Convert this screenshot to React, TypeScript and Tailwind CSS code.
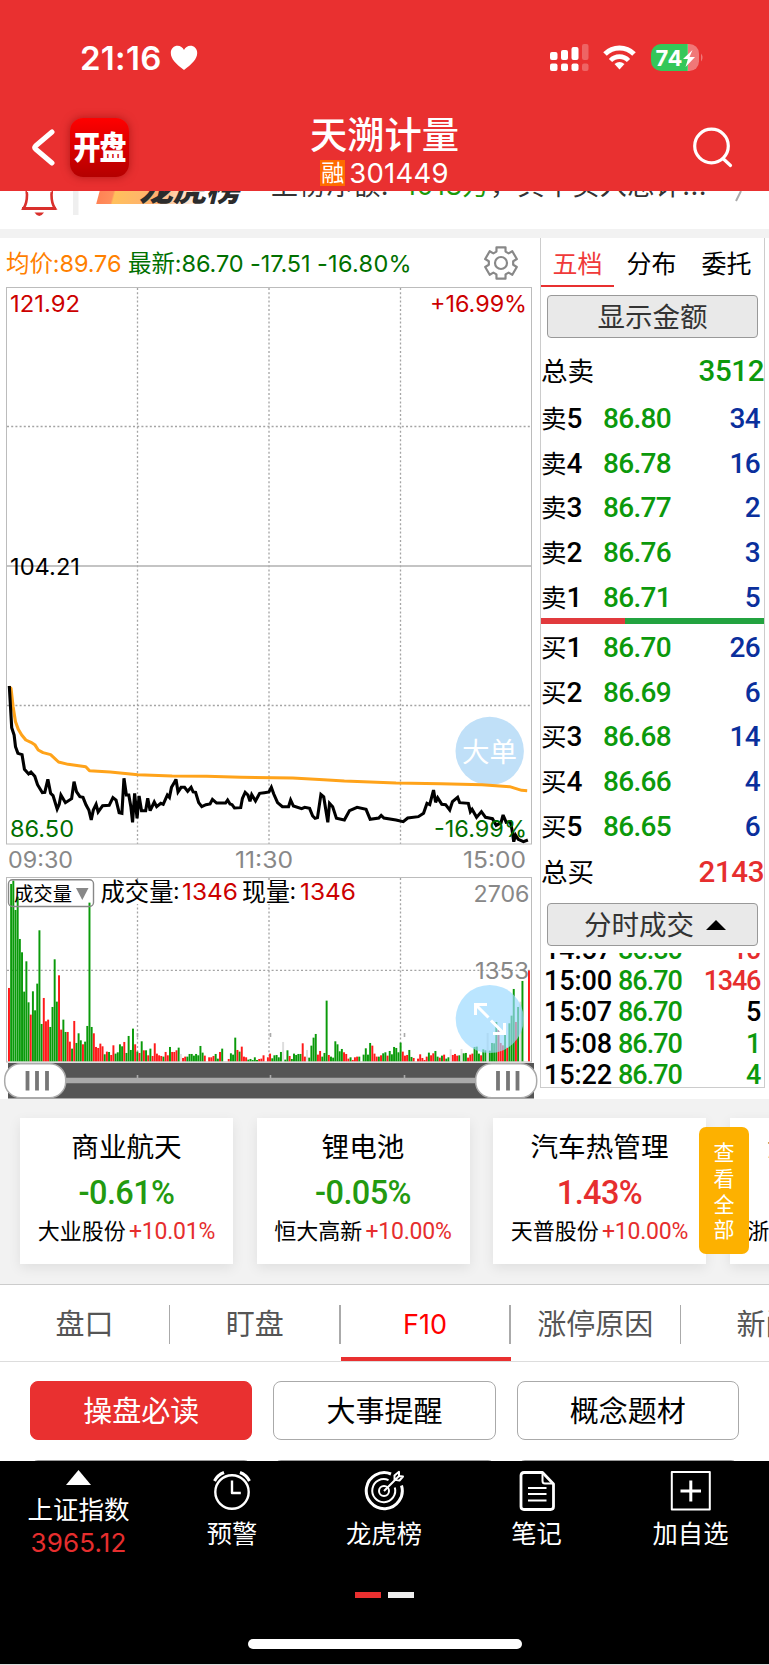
import React from "react";

const NUM = "font-[Inter,'Noto_Sans_CJK_SC',sans-serif]";
const DIN = "font-[Roboto,'Noto_Sans_CJK_SC',sans-serif]";

const VOLUME =
  "r354 g42 g32 g120 g80 g207 g247 g365 g274 g397 r434 g364 g421 g341 g181 g462 r384 r454 r449 g471 g411 g268 g395 r316 r479 g449 g486 r486 r515 g536 r453 g519 g490 g511 r523 g515 g468 g98 g471 r490 r531 r534 r521 r529 g553 r545 g546 r555 r526 g551 g547 g523 g529 r516 g549 g498 g540 g476 r523 g545 r549 g514 r541 g541 r556 g536 r558 r520 r551 r556 r558 g560 r546 r556 g531 r546 r546 r541 g533 y552 r564 r560 g560 g552 g552 g557 g552 g556 g528 g548 r557 y574 r562 r562 r558 g552 g566 r546 g536 y574 y574 r567 g550 g554 g503 r540 g545 r530 r560 r562 g569 g567 g570 g562 g570 r567 r566 r556 y574 r562 r551 g565 g556 g555 g562 g546 y516 g569 g541 r558 g567 g551 g555 g552 g552 r520 r560 y540 g563 g527 g503 g492 r554 r543 g560 g549 g392 r555 g560 g563 g514 g523 g544 g537 r547 r552 r566 g562 r570 r562 r560 g560 y574 g554 g535 g554 g519 r527 r551 r560 g560 r556 g550 g547 r557 g543 g553 g531 g534 g547 g518 r545 r557 r555 g540 g561 r564 y574 r566 r553 r564 r570 r560 g548 r556 r550 g543 g560 r563 g557 r554 g566 g562 y538 r555 r552 r557 g556 y537 g550 g549 r563 r554 r551 g531 g530 g551 r556 g538 g541 y489 g542 g519 g520 g456 r480 r519 r526 g483 r533 g460 g437 g357 r456 g411 y395 g333 y574 y574 r302";

const BARS = VOLUME.split(" ").map((s) => ({
  fill: s[0] === "r" ? "#ff1a1a" : s[0] === "g" ? "#0a9a0a" : "#dddddd",
  h: (574 - Number(s.slice(1))) / 3,
}));
const BAR_STEP = (529 - 9) / (BARS.length - 1);

const PRICE =
  "27,78 34,203 41,225 45,260 52,280 64,284 71,328 83,342 90,336 101,349 109,374 123,398 130,397 139,358 147,400 154,407 166,447 172,433 177,405 190,428 208,416 215,365 222,395 232,410 241,412 250,435 258,450 265,480 271,450 279,433 285,456 298,437 317,436 328,413 337,420 346,458 354,460 360,355 367,405 374,405 380,440 385,487 391,400 398,475 404,408 411,452 423,452 429,415 436,452 448,426 455,440 467,430 474,433 486,405 492,412 498,382 505,370 511,358 517,396 526,382 536,382 545,394 555,382 561,396 568,397 577,428 586,440 598,434 610,432 617,418 629,429 655,429 661,420 668,432 674,434 681,444 699,443 704,415 712,397 720,405 726,424 731,404 742,423 754,400 768,398 781,396 788,382 795,402 806,428 820,440 838,440 844,420 852,438 876,446 885,442 899,445 908,468 915,475 922,473 932,403 940,410 952,487 957,430 966,440 977,475 1000,480 1015,452 1037,442 1063,448 1075,478 1100,474 1107,466 1115,474 1150,480 1171,485 1184,474 1215,470 1230,460 1240,430 1248,434 1259,390 1265,427 1271,413 1283,433 1294,434 1306,450 1314,425 1329,412 1335,428 1360,430 1366,455 1371,448 1384,472 1398,455 1410,472 1430,476 1441,496 1455,488 1461,465 1470,487 1482,485 1487,510 1492,545 1497,525 1505,538 1520,545 1533,540";
const AVERAGE =
  "26,80 32,85 38,140 45,185 53,208 63,225 75,240 90,247 101,254 111,270 125,278 147,284 170,306 198,313 249,320 260,332 320,336 400,344 500,348 600,349 700,352 850,354 940,359 1000,363 1150,369 1280,371 1400,374 1480,380 1515,391 1531,392";

type LabelProps = { x: number; y: number; w: number; fill: string; size?: number; children: React.ReactNode };
const Label = ({ x, y, w, fill, size = 23, children }: LabelProps) => (
  <text x={x} y={y} textLength={w} lengthAdjust="spacingAndGlyphs" fill={fill} fontSize={size}>
    {children}
  </text>
);

function StatusBar() {
  return (
    <div className="flex h-[114px] items-start pl-[80px] pr-[65px] pt-[41px] text-white">
      <span className="w-[83px] text-[33px] font-semibold leading-[34px] tracking-[0.300px]">21:16</span>
      <svg className="ml-[7px] mt-[4px]" width="28" height="26" viewBox="0 0 28 26" fill="#fff">
        <path d="M14 25C6 19 0.8 14 0.8 8C0.8 3.5 4 .8 7.6 .8C10.4 .8 12.8 2.4 14 5C15.2 2.4 17.6 .8 20.4 .8C24 .8 27.2 3.5 27.2 8C27.2 14 22 19 14 25Z" />
      </svg>
      <div className="flex-1" />
      <svg className="mt-[2px]" width="154" height="30" viewBox="551 43 154 30" fill="#fff">
        <rect x="551" y="52" width="7.5" height="8" rx="2" />
        <rect x="562" y="50" width="7" height="10" rx="2" />
        <rect x="572.5" y="47" width="7" height="13" rx="2" />
        <rect x="583" y="44" width="6.5" height="16" rx="2" opacity=".25" />
        <rect x="551" y="63.500" width="7.5" height="7.500" rx="2" />
        <rect x="562" y="63.500" width="7" height="7.500" rx="2" />
        <rect x="572.5" y="63.500" width="7" height="7.500" rx="2" />
        <rect x="583" y="63.500" width="6.500" height="7.500" rx="2" opacity=".25" />
        <path d="M606 54a20.500 20.500 0 0 1 29 0" fill="none" stroke="#fff" strokeWidth="5" />
        <path d="M611.500 60.500a12.500 12.500 0 0 1 18 0" fill="none" stroke="#fff" strokeWidth="4.600" />
        <path d="M620.500 69.500l-5-5.500q5-4 10 0z" />
        <path d="M662 44h27v27h-27a10 10 0 0 1-10-10v-7a10 10 0 0 1 10-10z" fill="#34c759" />
        <path d="M688.500 44h2a9.500 9.500 0 0 1 9.500 9.500v8a9.500 9.500 0 0 1-9.500 9.500h-2z" opacity=".35" />
        <path d="M702 53.500q3 4 0 8z" opacity=".35" />
        <text x="656.500" y="65.500" fontSize="22" fontWeight="700" textLength="27">74</text>
        <path d="M693.500 50l-9.500 9h5l-2.500 8 9.500-10h-5.500z" />
      </svg>
    </div>
  );
}

function TitleBar() {
  return (
    <div className="flex h-[77px] text-white">
      <div className="flex w-[240px] items-start pl-[30px]">
        <svg className="mt-[15px]" width="26" height="37" viewBox="0 0 26 37" fill="none" stroke="#fff" strokeWidth="5" strokeLinecap="round" strokeLinejoin="round">
          <path d="M22 3L5.500 17Q4 18.500 5.500 20L22 34" />
        </svg>
        <div className="ml-[14px] mt-[4px] flex h-[59px] w-[59px] items-center justify-center rounded-[13px] bg-gradient-to-b from-[#ff0000] to-[#b40000] text-[27px] font-black leading-none tracking-[-1px] shadow-[0_0_8px_rgba(120,0,0,0.5)]">
          <span className="scale-y-[1.18]">开盘</span>
        </div>
      </div>
      <div className="flex w-[289px] flex-col items-center">
        <div className="h-[44px] text-[37.300px] font-medium leading-[44px]">天溯计量</div>
        <div className="flex h-[27px] items-center">
          <span className="mt-[2px] flex h-[26px] w-[25px] items-center justify-center bg-[#ff6a00] text-[23px] leading-[26px]">融</span>
          <span className="ml-[4px] mt-[3px] text-[27.500px] leading-[26px] tracking-[0.200px]">301449</span>
        </div>
      </div>
      <div className="flex-1 pl-[164px] pt-[13px]">
        <svg width="42" height="42" viewBox="0 0 42 42" fill="none" stroke="#fff" strokeWidth="3.200" strokeLinecap="round">
          <circle cx="18.500" cy="19" r="16.800" />
          <path d="M30.500 32L37.500 38.500" />
        </svg>
      </div>
    </div>
  );
}

function Notice() {
  return (
    <div className="flex h-[38px] overflow-hidden bg-white">
      <svg width="80" height="38" viewBox="0 191 80 38" className="shrink-0" fill="none">
        <path d="M27 191q-.5 0 0 3.500q0 9-3.500 14h31.500q-3.500-5-3.500-14q.5-3.500 0-3.500" stroke="#d9302c" strokeWidth="2.600" />
        <path d="M22 208.500h34" stroke="#d9302c" strokeWidth="3" />
        <path d="M34.500 212.500h9.500q-4.700 7-9.500 0z" fill="#d9302c" />
        <rect x="73" y="191" width="5.500" height="24" fill="#efefef" />
      </svg>
      <div className="ml-[15px] flex h-[13px] w-[152px] items-end overflow-hidden bg-[linear-gradient(105deg,#fff_4px,#ff8355_5px,#ff8f5c_18px,#ffc05c_20px,#ffb071_60px,#fff_108px)]">
        <span className="-mb-[5px] ml-[44px] whitespace-nowrap text-[34px] font-black italic leading-[40px] tracking-[-0.500px] text-[#2c2c2c]">龙虎榜</span>
      </div>
      <div className="-mt-[25px] ml-[24px] w-[442px] whitespace-nowrap text-[27px] leading-[40px] tracking-[0.450px] text-[#333]">
        上榜净额: <span className="ml-[8px] text-[#1a9a0a]">1018万</span>，其中买入总计...
      </div>
      <svg className="ml-[18px]" width="14" height="14" viewBox="0 0 14 14" fill="none" stroke="#aaa" strokeWidth="2">
        <path d="M10 0L5 10" />
      </svg>
    </div>
  );
}

function PriceChart() {
  const dots = { stroke: "#a4a4a4", strokeWidth: 1.300, strokeDasharray: "2 2.200" };
  return (
    <svg className="block" width="540" height="588" viewBox="0 287 540 588" fontFamily="Inter, 'Noto Sans CJK SC', sans-serif">
      <path d="M137.500 288V844M269 288V844M400.500 288V844M7 426.500H531M7 705.500H531" {...dots} />
      <path d="M7 566H531" stroke="#b0b0b0" strokeWidth="1.400" />
      <rect x="6.500" y="287.500" width="525" height="556.500" fill="none" stroke="#bcbcbc" />
      <circle cx="489.700" cy="751" r="34.200" fill="#c0e0f8" />
      <g transform="translate(0 660) scale(.34435 .33333)" fill="none" strokeWidth="9" strokeLinejoin="round">
        <polyline points={AVERAGE} stroke="#ffa31a" />
        <polyline points={PRICE} stroke="#000" strokeLinejoin="miter" strokeMiterlimit="3" />
      </g>
      <Label x={462} y={761.500} w={55} size={27.500} fill="#fff">大单</Label>
      <Label x={10} y={312} w={70} fill="#cc0000">121.92</Label>
      <Label x={430} y={312} w={97} fill="#cc0000">+16.99%</Label>
      <Label x={10} y={575} w={70} fill="#000">104.21</Label>
      <Label x={10} y={837} w={64} fill="#006e00">86.50</Label>
      <Label x={434} y={837} w={93} fill="#006e00">-16.99%</Label>
      <Label x={8} y={868} w={65} fill="#888">09:30</Label>
      <Label x={235} y={868} w={58} fill="#888">11:30</Label>
      <Label x={463} y={868} w={63} fill="#888">15:00</Label>
    </svg>
  );
}

function VolumeChart() {
  return (
    <svg className="block" width="540" height="224" viewBox="0 875 540 224" fontFamily="Inter, 'Noto Sans CJK SC', sans-serif">
      <path d="M137.500 878V1062M269 878V1062M400.500 878V1062M7 970.300H531" stroke="#a4a4a4" strokeWidth="1.300" strokeDasharray="2 2.200" />
      <rect x="6.500" y="877.500" width="525" height="184.500" fill="none" stroke="#bcbcbc" />
      {BARS.map((b, i) => (
        <rect key={i} x={8 + i * BAR_STEP} y={1061.300 - b.h} width="1.950" height={b.h} fill={b.fill} />
      ))}
      <rect x="8.500" y="879.700" width="85" height="26.800" rx="4" fill="none" stroke="#888" strokeWidth="1.400" />
      <Label x={14} y={900.500} w={58} size={19.500} fill="#000">成交量</Label>
      <path d="M76 888h12.500l-6.200 12z" fill="#888" />
      <rect x="99" y="882" width="258" height="22" fill="#fff" />
      <Label x={100.500} y={901} w={73} size={24.500} fill="#000">成交量</Label>
      <text x="173" y="899" fontSize="23">:</text>
      <Label x={182} y={899.500} w={56} fill="#cc0000">1346</Label>
      <Label x={242} y={901} w={48} size={24.500} fill="#000">现量</Label>
      <text x="289.500" y="899" fontSize="23">:</text>
      <Label x={300} y={899.500} w={56} fill="#cc0000">1346</Label>
      <Label x={473.500} y={902} w={56} fill="#888">2706</Label>
      <Label x={475} y={979} w={54} fill="#888">1353</Label>
      <circle cx="489.700" cy="1019" r="34" fill="#9ad8ff" fillOpacity=".68" />
      <path d="M475.500 1015v-10.500h11.500M475.500 1004.500l13 13M491 1020.500l13 13M504.500 1023v10.500h-11.500" fill="none" stroke="#fff" strokeWidth="3" />
      <rect x="8" y="1063" width="526" height="35.500" fill="#555" />
      <path d="M30 1080.500H510" stroke="#aaa" strokeWidth="5.500" />
      <path d="M137.500 1075v4M270.500 1075v4M404.500 1075v4M137.500 1033v4M270.500 1033v4M404.500 1033v4" stroke="#aaa" strokeWidth="1.600" />
      <rect x="4.700" y="1063.700" width="61" height="34" rx="16" fill="#fff" stroke="#aaa" strokeWidth="1.500" />
      <rect x="475.700" y="1063.700" width="61" height="34" rx="16" fill="#fff" stroke="#aaa" strokeWidth="1.500" />
      <path d="M27.500 1071v19.500M37 1071v19.500M47 1071v19.500M498 1071v19.500M508 1071v19.500M517.500 1071v19.500" stroke="#777" strokeWidth="3.800" />
    </svg>
  );
}

function Gear() {
  const pts: string[] = [];
  for (let i = 0; i < 6; i++) {
    const a = (i * Math.PI) / 3 - Math.PI / 2;
    const p = (r: number, d: number) => `${(18 + r * Math.cos(a + d)).toFixed(2)},${(18 + r * Math.sin(a + d)).toFixed(2)}`;
    pts.push(p(12.300, -0.380), p(16.300, -0.280), p(16.300, 0.280), p(12.300, 0.380));
  }
  return (
    <svg width="36" height="36" viewBox="0 0 36 36" fill="none" stroke="#888" strokeWidth="2.200" strokeLinejoin="round">
      <polygon points={pts.join(" ")} />
      <circle cx="18" cy="18" r="6" />
    </svg>
  );
}

function ChartPane() {
  return (
    <div className="w-[540px] bg-white">
      <div className="flex h-[49px] items-center whitespace-nowrap pt-[3px] text-[23.500px] leading-none">
        <span className="w-[121px] pl-[6px] tracking-[-0.100px] text-[#ff8000]">均价:89.76</span>
        <span className="w-[124px] pl-[7px] tracking-[-0.100px] text-[#007000]">最新:86.70</span>
        <span className="w-[69px] pl-[5px] tracking-[-0.100px] text-[#007000]">-17.51</span>
        <span className="flex-1 pl-[3px] tracking-[0.300px] text-[#007000]">-16.80%</span>
        <span className="-mt-[2px] w-[57px]"><Gear /></span>
      </div>
      <PriceChart />
      <VolumeChart />
    </div>
  );
}

const SELL = [["卖5", "86.80", "34"], ["卖4", "86.78", "16"], ["卖3", "86.77", "2"], ["卖2", "86.76", "3"], ["卖1", "86.71", "5"]];
const BUY = [["买1", "86.70", "26"], ["买2", "86.69", "6"], ["买3", "86.68", "14"], ["买4", "86.66", "4"], ["买5", "86.65", "6"]];
const TRADES = [
  ["14:57", "86.80", "10", "text-[#e62e2e]"],
  ["15:00", "86.70", "1346", "text-[#e62e2e]"],
  ["15:07", "86.70", "5", "text-black"],
  ["15:08", "86.70", "1", "text-[#0c990c]"],
  ["15:22", "86.70", "4", "text-[#0c990c]"],
];

function Level({ row }: { row: string[] }) {
  return (
    <div className="flex h-[44.600px] items-center pt-[2px] text-[28px] font-medium leading-none">
      <span className="w-[62px]"><span className="text-[25.500px] font-normal">{row[0][0]}</span>{row[0][1]}</span>
      <span className="tracking-[-0.700px] text-[#0c990c]">{row[1]}</span>
      <span className="flex-1 pr-[4px] text-right tracking-[-0.700px] text-[#0a2f9c]">{row[2]}</span>
    </div>
  );
}

function OrderBook() {
  return (
    <div className="w-[229px] bg-white">
      <div className={`${DIN} h-[849.500px] w-[225px] overflow-hidden border-x border-b border-[#ccc]`}>
        <div className="flex h-[49px] text-[25px] leading-[53px]">
          <span className="w-[73px] border-b-2 border-[#e83030] text-center text-[#f03a3a]">五档</span>
          <span className="w-[75px] text-center">分布</span>
          <span className="w-[75px] text-center">委托</span>
        </div>
        <div className="mx-[6px] mt-[8px] h-[43px] rounded-[4px] border border-[#999] bg-[#e9e9e9] text-center text-[27.500px] leading-[43px] text-[#333]">显示金额</div>
        <div className="mt-[10px] flex h-[47px] items-center justify-between pt-[1px] leading-none">
          <span className="text-[26.500px]">总卖</span>
          <span className="text-[29.500px] font-medium tracking-[-0.400px] text-[#0c990c]">3512</span>
        </div>
        <div className="mt-[1px]">{SELL.map((r) => <Level key={r[0]} row={r} />)}</div>
        <div className="-mt-[1px] flex h-[6px]"><i className="w-[84px] bg-[#e13a3d]" /><i className="flex-1 bg-[#23a340]" /></div>
        <div className="mt-[1px]">{BUY.map((r) => <Level key={r[0]} row={r} />)}</div>
        <div className="mt-[1px] flex h-[46px] items-center justify-between pt-[2px] leading-none">
          <span className="text-[26.500px]">总买</span>
          <span className="text-[29.500px] font-medium tracking-[-0.400px] text-[#e62e2e]">2143</span>
        </div>
        <div className="mx-[6px] mt-[8px] flex h-[43px] items-center rounded-[4px] border border-[#999] bg-[#e9e9e9] pl-[36px] pt-[2px] text-[27.500px] leading-none text-[#333]">
          分时成交
          <svg className="ml-[12px]" width="20" height="10" viewBox="0 0 20 10"><path d="M0 10L10 0L20 10z" /></svg>
        </div>
        <div className="mt-[7px] flex h-[137px] flex-col justify-end overflow-hidden">
          {TRADES.map((t) => (
            <div key={t[0]} className="flex h-[31.200px] shrink-0 items-center pt-[2px] text-[27px] font-medium leading-none">
              <span className="w-[77px] pl-[3px] tracking-[-0.100px]">{t[0]}</span>
              <span className="tracking-[-1px] text-[#0c990c]">{t[1]}</span>
              <span className={`flex-1 pr-[4px] text-right tracking-[-1.300px] ${t[3]}`}>{t[2]}</span>
            </div>
          ))}
        </div>
      </div>
    </div>
  );
}

const SECTORS = [
  ["商业航天", "-0.61%", "大业股份", "+10.01%"],
  ["锂电池", "-0.05%", "恒大高新", "+10.00%"],
  ["汽车热管理", "1.43%", "天普股份", "+10.00%"],
  ["液冷服务器", "1.20%", "浙江世宝", "+10.00%"],
];

function Sectors() {
  return (
    <div className="relative h-[185px] overflow-hidden bg-[#f2f2f2]">
      <div className="flex gap-[23.500px] pl-[20px] pt-[19px]">
        {SECTORS.map(([name, pct, stock, gain]) => (
          <div key={name} className="flex h-[146px] w-[213px] shrink-0 flex-col items-center whitespace-nowrap bg-white shadow-[0_4px_12px_rgba(0,0,0,0.08)]">
            <div className="mt-[9px] h-[44px] text-[27.600px] leading-[41px]">{name}</div>
            <div className={`${DIN} h-[44px] text-[32.500px] font-medium leading-[44px] tracking-[-0.600px] ${pct[0] === "-" ? "text-[#239a10]" : "text-[#e62e2e]"}`}>{pct}</div>
            <div className="h-[36px] text-[22px] leading-[33px]">
              {stock}
              <span className={`${DIN} ml-[3px] text-[23px] tracking-[-0.200px] text-[#e62e2e]`}>{gain}</span>
            </div>
          </div>
        ))}
      </div>
      <div className="absolute left-[699px] top-[28px] flex h-[127px] w-[50px] flex-col items-center justify-center rounded-[7px] bg-[#fdb100] pt-[2px] text-[21px] leading-[25.800px] text-white">
        <span>查</span><span>看</span><span>全</span><span>部</span>
      </div>
    </div>
  );
}

const TABS = ["盘口", "盯盘", "F10", "涨停原因", "新闻"];

function Tabs() {
  return (
    <div className="flex h-[78px] overflow-hidden border-y border-t-[#ccc] border-b-[#ddd] bg-white">
      {TABS.map((t) => (
        <div key={t} className={`flex w-[170.300px] shrink-0 items-center border-b-[4px] text-[29px] leading-none ${t === "F10" ? "border-[#e93030] text-[#ff0000]" : "border-transparent text-[#555]"}`}>
          <span className={`flex-1 pt-[7px] text-center ${t === "F10" ? "text-[27px]" : ""}`}>{t}</span>
          <i className="mt-[6px] h-[39px] w-[1.500px] bg-[#aaa]" />
        </div>
      ))}
    </div>
  );
}

function Pills() {
  return (
    <div className="grid h-[99px] grid-cols-3 gap-x-[21px] gap-y-[19.500px] overflow-hidden bg-white px-[30px] pt-[19px] text-center text-[29px] leading-[60px]">
      <div className="h-[59px] rounded-[8px] border border-[#e93030] bg-[#e93030] text-white">操盘必读</div>
      <div className="h-[59px] rounded-[8px] border border-[#aaa]">大事提醒</div>
      <div className="h-[59px] rounded-[8px] border border-[#aaa]">概念题材</div>
      <div className="h-[59px] rounded-[8px] border border-[#999]" />
      <div className="h-[59px] rounded-[8px] border border-[#999]" />
      <div className="h-[59px] rounded-[8px] border border-[#999]" />
    </div>
  );
}

function Tool({ label, width, children }: { label: string; width: string; children: React.ReactNode }) {
  return (
    <div className={`flex flex-col items-center pt-[9px] ${width}`}>
      <svg width="42" height="42" viewBox="0 0 42 42" fill="none" stroke="#fff" strokeWidth="2.400" strokeLinejoin="round">{children}</svg>
      <span className="mt-[4px] text-[25.300px] leading-[36px]">{label}</span>
    </div>
  );
}

function BottomBar() {
  return (
    <div className="flex h-[203px] flex-col bg-black text-white">
      <div className="flex h-[131px]">
        <div className="flex w-[157px] flex-col items-center pt-[9px]">
          <svg width="25" height="15" viewBox="0 0 25 15" fill="#fff"><path d="M12.500 0L25 15H0z" /></svg>
          <span className="mt-[7px] text-[25.500px] leading-[36px]">上证指数</span>
          <span className="mt-[1px] text-[26px] leading-[28px] tracking-[0.100px] text-[#e62e2e]">3965.12</span>
        </div>
        <Tool label="预警" width="w-[150px]">
          <circle cx="21" cy="22" r="16.700" />
          <path d="M21 10.500v12.500h8.800" />
          <path d="M3.500 11Q6.500 5 13 2.500M38.500 11Q35.500 5 29 2.500" strokeWidth="3" />
        </Tool>
        <Tool label="龙虎榜" width="w-[154px]">
          <path d="M28 4A18 18 0 1 0 38.500 15.500" strokeWidth="3" />
          <path d="M25.500 10.200A11.500 11.500 0 1 0 31.800 17.500" strokeWidth="2" />
          <circle cx="21" cy="21" r="5" strokeWidth="2" />
          <path d="M21 21L36 6M31.500 9.800V5.500L36 1.800V6L40 6.500L36.500 10.500Z" strokeWidth="2" />
        </Tool>
        <Tool label="笔记" width="w-[151px]">
          <path d="M8 2.500h18.500l11 11.500v22.500q0 3-3 3H8q-3 0-3-3V5.500q0-3 3-3z" strokeWidth="2.800" />
          <path d="M26.500 3v8q0 2.500 2.500 2.500h8M12 18h18.500M12 24h18.500M12 30.500h18.500" strokeWidth="2" />
        </Tool>
        <Tool label="加自选" width="w-[157px]">
          <path d="M1.800 2h38v37.500h-38z" strokeWidth="2" />
          <path d="M20.800 10.500v21M10.500 21h20.500" strokeWidth="3" />
        </Tool>
      </div>
      <div className="flex h-[47px] justify-center gap-[7px]">
        <i className="h-[6px] w-[26px] bg-[#e93030]" />
        <i className="h-[6px] w-[26px] bg-[#eee]" />
      </div>
      <div className="mx-auto h-[10px] w-[274px] rounded-full bg-white" />
    </div>
  );
}

export default function App() {
  return (
    <div className={`${NUM} flex h-[1665px] w-[769px] flex-col overflow-hidden bg-[#ddd] text-black`}>
      <header className="h-[191px] shrink-0 bg-[#e93030]">
        <StatusBar />
        <TitleBar />
      </header>
      <Notice />
      <div className="h-[9px] shrink-0 bg-[#f2f2f2]" />
      <main className="flex h-[861px] shrink-0 bg-white">
        <ChartPane />
        <OrderBook />
      </main>
      <Sectors />
      <Tabs />
      <Pills />
      <BottomBar />
    </div>
  );
}
